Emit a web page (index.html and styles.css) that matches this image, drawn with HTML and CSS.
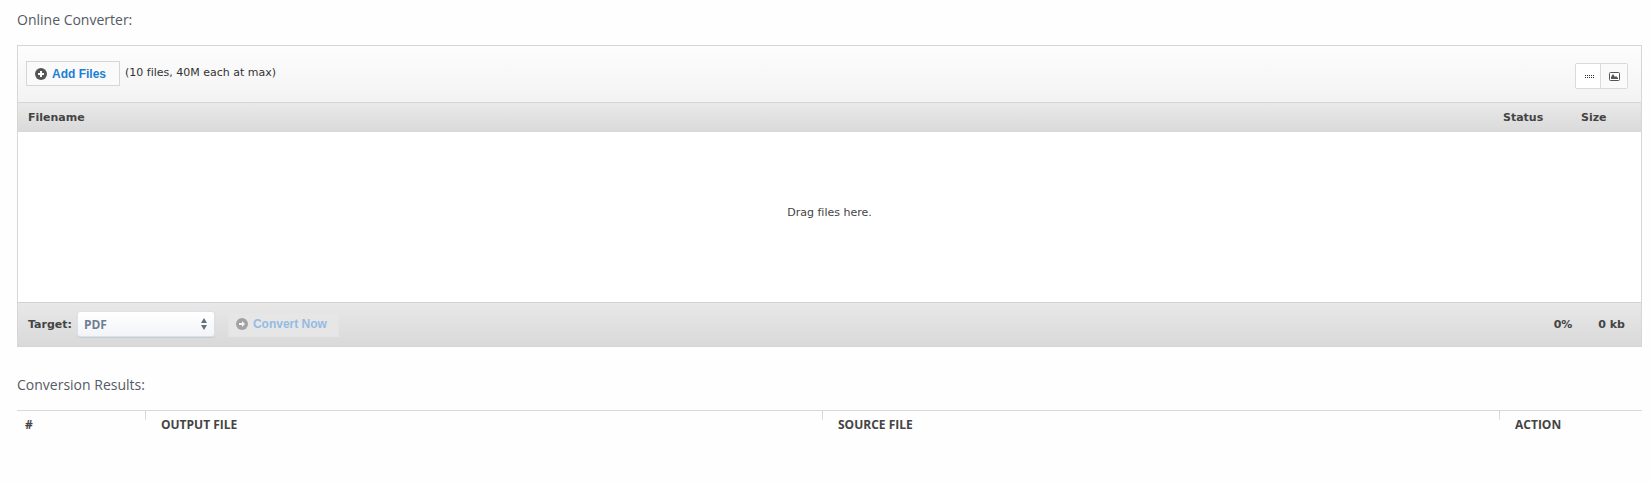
FILE: index.html
```
<!DOCTYPE html>
<html lang="en">
<head>
    <meta charset="UTF-8">
    <meta name="viewport" content="width=device-width, initial-scale=1.0">
    <title>Online Converter</title>
    <link rel="stylesheet" href="styles.css">
</head>
<body>
    <h2 class="section-title">Online Converter:</h2>

    <form class="uploader">
        <div class="toolbar">
            <button type="button" class="btn btn-add">
                <svg class="btn-icon" viewBox="0 0 12 12" aria-hidden="true">
                    <circle cx="6" cy="6" r="6" fill="#555"/>
                    <path d="M5 3h2v2h2v2H7v2H5V7H3V5h2z" fill="#fff"/>
                </svg>
                Add Files
            </button>
            <span class="limits">(10 files, 40M each at max)</span>
            <div class="view-switch">
                <button type="button" class="view-btn active" aria-label="List view">
                    <svg width="16" height="16" viewBox="0 0 16 16" aria-hidden="true">
                        <path d="M5 7.5h9M5 9.5h9" fill="none" stroke="#333" stroke-dasharray="1 1"/>
                    </svg>
                </button>
                <button type="button" class="view-btn" aria-label="Thumbnails view">
                    <svg width="16" height="16" viewBox="0 0 16 16" aria-hidden="true">
                        <rect x="3.5" y="4.5" width="10" height="8" rx="1" fill="#fff" stroke="#555"/>
                        <path d="M5 11V9l2-3 2 3 1-1 2 2v1z" fill="#555"/>
                    </svg>
                </button>
            </div>
        </div>

        <table class="file-list">
            <thead>
                <tr>
                    <th class="col-name">Filename</th>
                    <th class="col-status">Status</th>
                    <th class="col-size">Size</th>
                </tr>
            </thead>
            <tbody>
                <tr>
                    <td class="drop-area" colspan="3">Drag files here.</td>
                </tr>
            </tbody>
        </table>

        <div class="footer">
            <label class="target-label" for="target">Target:</label>
            <div class="select-wrap">
                <select id="target" name="target">
                    <option value="pdf">PDF</option>
                </select>
                <svg class="select-arrows" viewBox="0 0 6 12" aria-hidden="true">
                    <path d="M3 0l3 5H0zM3 12l3-5H0z" fill="#64707d"/>
                </svg>
            </div>
            <button type="button" class="btn btn-convert" disabled>
                <svg class="btn-icon" viewBox="0 0 12 12" aria-hidden="true">
                    <circle cx="6" cy="6" r="6" fill="#a2a2a2"/>
                    <path d="M3 5h3V3l3 3-3 3V7H3z" fill="#f4f4f4"/>
                </svg>
                Convert Now
            </button>
            <span class="total-percent">0%</span>
            <span class="total-size">0 kb</span>
        </div>
    </form>

    <h2 class="section-title results-title">Conversion Results:</h2>

    <table class="results">
        <thead>
            <tr>
                <th class="col-num">#</th>
                <th>OUTPUT FILE</th>
                <th>SOURCE FILE</th>
                <th class="col-action">ACTION</th>
            </tr>
        </thead>
    </table>
</body>
</html>
```
FILE: styles.css
```
* {
    box-sizing: border-box;
}
body {
    margin: 0;
    padding: 10px 9px 0 17px;
    background: #fefefe;
    color: #444;
    font-family: Verdana, "DejaVu Sans", sans-serif;
    font-size: 11px;
    font-variant-ligatures: none;
}
.section-title {
    margin: 0;
    font-family: "Open Sans", sans-serif;
    font-size: 14px;
    font-weight: 400;
    line-height: 20px;
    color: #555a64;
}

/* Uploader */
.uploader {
    margin-top: 15px;
    border: 1px solid #d6d6d6;
}
.toolbar {
    display: flex;
    align-items: flex-start;
    height: 56px;
    padding: 15px 13px 0 8px;
    background: linear-gradient(#fdfdfd, #f3f3f3);
}
.btn {
    display: flex;
    align-items: center;
    gap: 5px;
    height: 25px;
    padding: 0 8px;
    border: 1px solid #d6d6d6;
    background: #fafafa;
    font-family: Arial, "Liberation Sans", sans-serif;
    font-size: 12px;
    font-weight: bold;
    white-space: nowrap;
    cursor: pointer;
}
.btn-icon {
    width: 12px;
    height: 12px;
}
.btn-add {
    padding-right: 13px;
    color: #1a7fd4;
}
.limits {
    margin-left: 5px;
    line-height: 24px;
    color: #333;
}
.view-switch {
    display: flex;
    margin: 2px 0 0 auto;
    border: 1px solid #dadada;
    border-radius: 2px;
}
.view-btn {
    display: flex;
    align-items: center;
    justify-content: center;
    width: 26px;
    height: 24px;
    padding: 0;
    border: 0;
    background: #fafafa;
    cursor: pointer;
}
.view-btn.active {
    width: 25px;
    border-right: 1px solid #dadada;
    background: #fff;
}

/* File list */
.file-list {
    width: 100%;
    border-collapse: separate;
    border-spacing: 0;
}
.file-list th {
    height: 30px;
    padding: 0 10px;
    border-top: 1px solid #d6d6d6;
    border-bottom: 1px solid #d9d9d9;
    background: linear-gradient(#e9e9e9, #dadada);
    text-align: left;
}
.file-list .col-status {
    width: 78px;
}
.file-list .col-size {
    width: 70px;
}
.drop-area {
    height: 170px;
    padding: 0 0 10px;
    background: #fff;
    text-align: center;
}

/* Footer */
.footer {
    display: flex;
    align-items: center;
    height: 44px;
    padding: 0 16px 1px 10px;
    border-top: 1px solid #d3d3d3;
    background: linear-gradient(#e8e8e8, #d9d9d9);
    font-weight: bold;
}
.select-wrap {
    position: relative;
    width: 138px;
    margin: 0 13px 0 5px;
}
.select-wrap select {
    display: block;
    width: 100%;
    height: 26px;
    padding: 0 20px 0 6px;
    border: 1px solid #dde1e6;
    border-radius: 3px;
    appearance: none;
    background: linear-gradient(#fff, #f2f4f8);
    box-shadow: 0 1px 1px #c3ccd6;
    color: #6f7f90;
    font-family: "Open Sans", sans-serif;
    font-size: 12px;
    font-weight: 700;
}
.select-arrows {
    position: absolute;
    top: 7px;
    right: 8px;
    width: 6px;
    height: 12px;
    pointer-events: none;
}
.btn-convert {
    border-color: #e4e4e4;
    background: #e6e6e6;
    color: #94bbe3;
    padding: 0 11px 0 7px;
    cursor: default;
}
.total-percent {
    margin-left: auto;
}
.total-size {
    margin-left: 26px;
}

/* Results */
.results-title {
    margin-top: 28px;
}
.results {
    width: 100%;
    margin-top: 15px;
    border-top: 1px solid #d9d9d9;
    border-collapse: separate;
    border-spacing: 0;
    table-layout: fixed;
}
.results th {
    height: 27px;
    padding: 0 8px 0 16px;
    background: linear-gradient(#d3d3d3, #e2e2e2) no-repeat left top / 1px 9px;
    font-family: "Open Sans", sans-serif;
    font-size: 12px;
    font-weight: 700;
    text-align: left;
}
.results .col-num {
    width: 128px;
    padding-left: 8px;
    background: none;
}
.results .col-action {
    width: 143px;
}
```
